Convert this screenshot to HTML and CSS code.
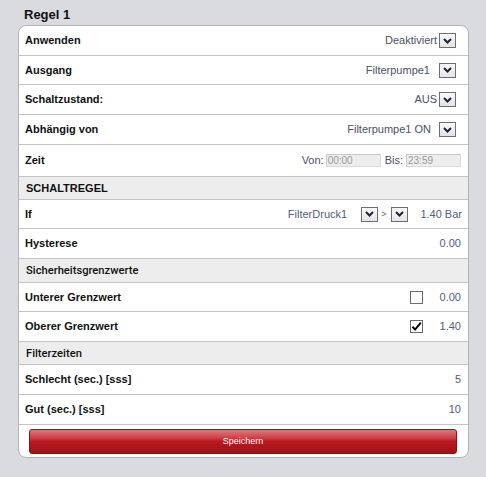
FILE: index.html
```html
<!DOCTYPE html>
<html lang="de">
<head>
<meta charset="utf-8">
<title>Regel 1</title>
<link rel="stylesheet" href="styles.css">
</head>
<body>
<div class="title">Regel 1</div>
<div class="card">
  <div class="row h30">
    <span class="label">Anwenden</span>
    <span class="ctrl"><span class="txt">Deaktiviert</span><span class="sel g2"><svg width="9" height="6" viewBox="0 0 9 6"><path d="M1 1l3.5 3.5L8 1" /></svg></span></span>
  </div>
  <div class="row h29">
    <span class="label">Ausgang</span>
    <span class="ctrl"><span class="txt">Filterpumpe1</span><span class="sel g9"><svg width="9" height="6" viewBox="0 0 9 6"><path d="M1 1l3.5 3.5L8 1" /></svg></span></span>
  </div>
  <div class="row h30">
    <span class="label">Schaltzustand:</span>
    <span class="ctrl"><span class="txt">AUS</span><span class="sel g2"><svg width="9" height="6" viewBox="0 0 9 6"><path d="M1 1l3.5 3.5L8 1" /></svg></span></span>
  </div>
  <div class="row h30">
    <span class="label">Abhängig von</span>
    <span class="ctrl"><span class="txt">Filterpumpe1 ON</span><span class="sel g8"><svg width="9" height="6" viewBox="0 0 9 6"><path d="M1 1l3.5 3.5L8 1" /></svg></span></span>
  </div>
  <div class="row h32">
    <span class="label">Zeit</span>
    <span class="ctrl time">
      <span class="txt">Von:</span><span class="field">00:00</span>
      <span class="txt bis">Bis:</span><span class="field">23:59</span>
    </span>
  </div>
  <div class="row head h23"><span class="label caps">SCHALTREGEL</span></div>
  <div class="row h29">
    <span class="label">If</span>
    <span class="ctrl">
      <span class="val">FilterDruck1</span>
      <span class="sel g14"><svg width="9" height="6" viewBox="0 0 9 6"><path d="M1 1l3.5 3.5L8 1" /></svg></span>
      <span class="op">&gt;</span>
      <span class="sel"><svg width="9" height="6" viewBox="0 0 9 6"><path d="M1 1l3.5 3.5L8 1" /></svg></span>
      <span class="val unit">1.40 Bar</span>
    </span>
  </div>
  <div class="row h30">
    <span class="label">Hysterese</span>
    <span class="ctrl"><span class="val">0.00</span></span>
  </div>
  <div class="row head h24"><span class="label sub">Sicherheitsgrenzwerte</span></div>
  <div class="row h29">
    <span class="label">Unterer Grenzwert</span>
    <span class="ctrl"><span class="check"></span><span class="val num">0.00</span></span>
  </div>
  <div class="row h30">
    <span class="label">Oberer Grenzwert</span>
    <span class="ctrl"><span class="check"><svg width="11" height="11" viewBox="0 0 11 11"><path d="M1.5 5.8l2.6 2.8L9.8 1.6" /></svg></span><span class="val num">1.40</span></span>
  </div>
  <div class="row head h23"><span class="label sub">Filterzeiten</span></div>
  <div class="row h30">
    <span class="label">Schlecht (sec.) [sss]</span>
    <span class="ctrl"><span class="val">5</span></span>
  </div>
  <div class="row h30">
    <span class="label">Gut (sec.) [sss]</span>
    <span class="ctrl"><span class="val">10</span></span>
  </div>
  <div class="foot">
    <button class="save" type="button">Speichern</button>
  </div>
</div>
</body>
</html>
```
FILE: styles.css
```css
html, body {
  margin: 0;
  padding: 0;
  background: #dadbdf;
}

body {
  font-family: "Liberation Sans", Arial, sans-serif;
  color: #111;
}

.title {
  box-sizing: border-box;
  height: 25px;
  padding: 7px 0 0 24px;
  font-size: 13px;
  line-height: 16px;
  font-weight: bold;
  color: #111;
}

.card {
  box-sizing: border-box;
  width: 451px;
  margin-left: 18px;
  background: #fff;
  border: 1px solid #b3b4b8;
  border-radius: 8px;
  overflow: hidden;
}

.row {
  box-sizing: border-box;
  display: flex;
  align-items: center;
  justify-content: space-between;
  padding: 0 7px 0 6px;
  border-bottom: 1px solid #c4c4c6;
}

.h23 { height: 23px; }
.h24 { height: 24px; }
.h29 { height: 29px; }
.h30 { height: 30px; }
.h32 { height: 32px; }

.head {
  background: #ededed;
}

.label {
  font-size: 11px;
  font-weight: bold;
  line-height: 13px;
}

.label.caps {
  padding-left: 1px;
}

.label.sub {
  padding-left: 1px;
  font-family: Roboto, "Liberation Sans", sans-serif;
  font-weight: 500;
  font-size: 11.2px;
}

.ctrl {
  display: flex;
  align-items: center;
  font-size: 11px;
  line-height: 13px;
}

.txt {
  color: #4c5262;
}

.val {
  color: #52607c;
}

.sel {
  box-sizing: border-box;
  display: flex;
  align-items: center;
  justify-content: center;
  width: 17px;
  height: 15px;
  border: 1px solid #6f6f72;
  background: linear-gradient(#fbfbfb, #e4e4e6);
}

.sel svg path {
  fill: none;
  stroke: #1b2240;
  stroke-width: 2;
}

.ctrl > .sel:last-child {
  margin-right: 5px;
}

.g2 { margin-left: 2px; }
.g8 { margin-left: 8px; }
.g9 { margin-left: 9px; }
.g14 { margin-left: 14px; }

.op {
  margin: 0 5px 0 3px;
  font-size: 9px;
  color: #666;
}

.unit {
  margin-left: 12px;
  margin-right: -1px;
}

.time .field {
  box-sizing: border-box;
  width: 55px;
  height: 13px;
  margin-left: 2px;
  padding-left: 1px;
  background: #ededed;
  border: 1px solid #dadada;
  border-top-color: #c9c9c9;
  border-left-color: #c9c9c9;
  font-size: 10px;
  line-height: 11px;
  color: #9a9a9a;
}

.time .bis {
  margin-left: 4px;
}

.time .field:last-child {
  margin-left: 3px;
}

.check {
  box-sizing: border-box;
  display: flex;
  align-items: center;
  justify-content: center;
  width: 13px;
  height: 13px;
  border: 1px solid #6a6a6a;
  background: #fff;
}

.check svg path {
  fill: none;
  stroke: #000;
  stroke-width: 2;
}

.num {
  margin-left: 17px;
}

.foot {
  box-sizing: border-box;
  height: 32px;
  padding: 4px 11px 3px 10px;
}

.save {
  display: block;
  box-sizing: border-box;
  width: 100%;
  height: 25px;
  margin: 0;
  padding: 0;
  border: 1px solid #8c1014;
  border-radius: 3px;
  background: linear-gradient(#dd7a80 0%, #cf3d45 35%, #b81a21 50%, #ac161b 75%, #9a1317 100%);
  color: #fff;
  font-family: "Liberation Sans", Arial, sans-serif;
  font-size: 9px;
  line-height: 23px;
  cursor: pointer;
}
```
